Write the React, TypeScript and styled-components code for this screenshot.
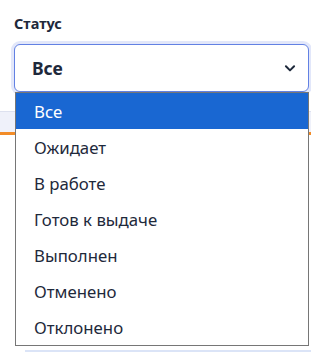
import { useState } from "react";
import styled, { createGlobalStyle } from "styled-components";

const GlobalStyle = createGlobalStyle`
  html, body {
    margin: 0;
    padding: 0;
    background: #ffffff;
  }
  body {
    font-family: "Noto Sans", "Open Sans", "Liberation Sans", sans-serif;
    color: #1e293b;
  }
`;

const Page = styled.div`
  position: relative;
  width: 311px;
  height: 357px;
  overflow: hidden;
`;

const Field = styled.div`
  position: relative;
  padding: 14px 2px 0 14px;
  z-index: 2;
`;

const Label = styled.div`
  font-size: 14.5px;
  font-weight: 700;
  line-height: 18px;
  margin-bottom: 12px;
  color: #1e293b;
`;

const SelectBox = styled.div`
  box-sizing: border-box;
  width: 295px;
  height: 48px;
  display: flex;
  align-items: center;
  justify-content: space-between;
  padding: 0 11px 0 17px;
  border: 1px solid #6281e3;
  border-radius: 6px;
  box-shadow: 0 0 0 3px #e2e7fa;
  background: #ffffff;
  font-size: 17.5px;
  font-weight: 700;
  color: #1e293b;
`;

const Listbox = styled.ul`
  position: absolute;
  top: 92px;
  left: 15px;
  box-sizing: border-box;
  width: 294px;
  margin: 0;
  padding: 0;
  list-style: none;
  background: #ffffff;
  border: 1px solid #767676;
  z-index: 3;
`;

const Option = styled.li<{ $active: boolean }>`
  height: 36px;
  display: flex;
  align-items: center;
  padding-left: 18px;
  font-size: 16.8px;
  color: ${(p) => (p.$active ? "#ffffff" : "#1e293b")};
  background: ${(p) => (p.$active ? "#1967d2" : "transparent")};
`;

const Behind = styled.div`
  margin-top: 19px;
`;

const TableHead = styled.div`
  height: 20px;
  background: #eff1fa;
  border-top: 1px solid #dde1ef;
  border-bottom: 3px solid #f28c28;
`;

const TableBody = styled.div`
  height: 215px;
  margin-left: 25px;
  border-bottom: 2px solid #dbe4f7;
`;

const options = [
  "Все",
  "Ожидает",
  "В работе",
  "Готов к выдаче",
  "Выполнен",
  "Отменено",
  "Отклонено",
];

const Chevron = () => (
  <svg width="14" height="14" viewBox="0 0 24 24" fill="none">
    <path
      d="M5 9l7 7 7-7"
      stroke="#1e293b"
      strokeWidth="3.4"
      strokeLinecap="round"
      strokeLinejoin="round"
    />
  </svg>
);

const App = () => {
  const [selected] = useState(0);

  return (
    <Page>
      <GlobalStyle />
      <Field>
        <Label>Статус</Label>
        <SelectBox>
          <span>{options[selected]}</span>
          <Chevron />
        </SelectBox>
      </Field>
      <Behind>
        <TableHead />
        <TableBody />
      </Behind>
      <Listbox>
        {options.map((o, i) => (
          <Option key={o} $active={i === selected}>
            {o}
          </Option>
        ))}
      </Listbox>
    </Page>
  );
};

export default App;
